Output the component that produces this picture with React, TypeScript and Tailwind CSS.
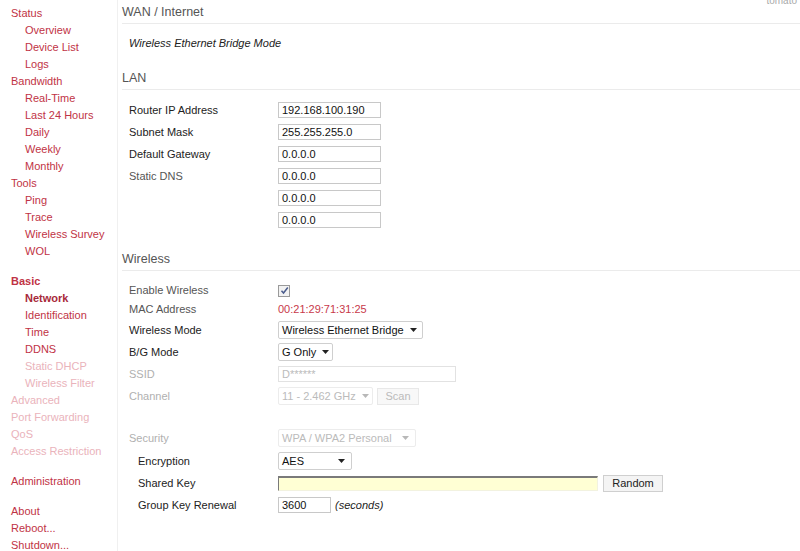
import React from "react";

const font = { fontFamily: '"Liberation Sans", Arial, sans-serif' };

type NavItem = { label: string; sub?: boolean; bold?: boolean; faded?: boolean; dark?: boolean };

const groups: NavItem[][] = [
  [
    { label: "Status" },
    { label: "Overview", sub: true },
    { label: "Device List", sub: true },
    { label: "Logs", sub: true },
    { label: "Bandwidth" },
    { label: "Real-Time", sub: true },
    { label: "Last 24 Hours", sub: true },
    { label: "Daily", sub: true },
    { label: "Weekly", sub: true },
    { label: "Monthly", sub: true },
    { label: "Tools" },
    { label: "Ping", sub: true },
    { label: "Trace", sub: true },
    { label: "Wireless Survey", sub: true },
    { label: "WOL", sub: true },
  ],
  [
    { label: "Basic", bold: true },
    { label: "Network", sub: true, bold: true, dark: true },
    { label: "Identification", sub: true },
    { label: "Time", sub: true },
    { label: "DDNS", sub: true },
    { label: "Static DHCP", sub: true, faded: true },
    { label: "Wireless Filter", sub: true, faded: true },
    { label: "Advanced", faded: true },
    { label: "Port Forwarding", faded: true },
    { label: "QoS", faded: true },
    { label: "Access Restriction", faded: true },
  ],
  [{ label: "Administration" }],
  [{ label: "About" }, { label: "Reboot..." }, { label: "Shutdown..." }],
];

function Sidebar() {
  return (
    <nav className="w-[118px] shrink-0 border-r border-[#f0f0f0] pt-[5px] text-[11px] leading-[17px]">
      {groups.map((g, i) => (
        <div key={i} className={i === 0 ? "" : "mt-[13px]"}>
          {g.map((it) => (
            <div
              key={it.label}
              className={`${it.sub ? "pl-[25px]" : "pl-[11px]"} ${it.bold ? "font-bold" : ""} ${
                it.faded ? "text-[#eab3bb]" : it.dark ? "text-[#a82a3a]" : "text-[#bf3345]"
              } whitespace-nowrap`}
            >
              {it.label}
            </div>
          ))}
        </div>
      ))}
    </nav>
  );
}

function Section({ title, children }: { title: string; children: React.ReactNode }) {
  return (
    <section>
      <h3 className="text-[12.5px] leading-[16px] text-[#555] pb-[3px] border-b border-[#ebebeb]">{title}</h3>
      {children}
    </section>
  );
}

function Row({
  label,
  children,
  indent,
  tone = "text-[#222]",
  h = "h-[22px]",
}: {
  label: string;
  children?: React.ReactNode;
  indent?: boolean;
  tone?: string;
  h?: string;
}) {
  return (
    <div className={`flex items-center ${h}`}>
      <div className={`w-[156px] shrink-0 ${indent ? "pl-[16px]" : "pl-[7px]"} ${tone}`}>{label}</div>
      <div className="flex items-center gap-[4px]">{children}</div>
    </div>
  );
}

function TextBox({ value, w = "w-[103px]", disabled }: { value: string; w?: string; disabled?: boolean }) {
  return (
    <div
      className={`${w} h-[16px] border border-[#c8c8c8] bg-white px-[3px] leading-[14px] ${
        disabled ? "text-[#bbb] border-[#e2e2e2]" : "text-[#111]"
      }`}
    >
      {value}
    </div>
  );
}

function Caret({ light }: { light?: boolean }) {
  return (
    <svg width="7" height="4" viewBox="0 0 7 4" className="ml-auto shrink-0">
      <path d="M0 0h7L3.5 4z" fill={light ? "#b8b8b8" : "#222"} />
    </svg>
  );
}

function Select({ value, w, disabled }: { value: string; w: string; disabled?: boolean }) {
  return (
    <div
      className={`${w} h-[18px] flex items-center gap-[6px] rounded-[2px] border bg-white pl-[3px] pr-[6px] ${
        disabled ? "border-[#ececec] text-[#bbb]" : "border-[#cfcfcf] text-[#111]"
      }`}
    >
      <span className="whitespace-nowrap">{value}</span>
      <Caret light={disabled} />
    </div>
  );
}

export default function App() {
  return (
    <div className="relative flex w-[800px] h-[551px] overflow-hidden bg-white text-[11px]" style={font}>
      <Sidebar />
      <main className="flex-1 pl-[4px] pt-[4px]">
        <Section title="WAN / Internet">
          <p className="italic text-[#222] pl-[7px] mt-[12px] leading-[14px]">Wireless Ethernet Bridge Mode</p>
        </Section>

        <div className="mt-[20px]">
          <Section title="LAN">
            <div className="mt-[9px]">
              <Row label="Router IP Address">
                <TextBox value="192.168.100.190" />
              </Row>
              <Row label="Subnet Mask">
                <TextBox value="255.255.255.0" />
              </Row>
              <Row label="Default Gateway">
                <TextBox value="0.0.0.0" />
              </Row>
              <Row label="Static DNS" tone="text-[#555]">
                <TextBox value="0.0.0.0" />
              </Row>
              <Row label="">
                <TextBox value="0.0.0.0" />
              </Row>
              <Row label="">
                <TextBox value="0.0.0.0" />
              </Row>
            </div>
          </Section>
        </div>

        <div className="mt-[20px]">
          <Section title="Wireless">
            <div className="mt-[10px]">
              <Row label="Enable Wireless" tone="text-[#555]" h="h-[19px]">
                <div className="w-[12px] h-[12px] border border-[#9a9a9a] bg-[#f2f2f2] flex items-center justify-center">
                  <svg width="9" height="9" viewBox="0 0 9 9">
                    <path d="M1.5 4.8l2 2.2L7.8 1.5" fill="none" stroke="#4a5c8c" strokeWidth="1.5" />
                  </svg>
                </div>
              </Row>
              <Row label="MAC Address" tone="text-[#555]" h="h-[19px]">
                <span className="text-[#c8394a]">00:21:29:71:31:25</span>
              </Row>
              <Row label="Wireless Mode">
                <Select value="Wireless Ethernet Bridge" w="w-[145px]" />
              </Row>
              <Row label="B/G Mode">
                <Select value="G Only" w="w-[55px]" />
              </Row>
              <Row label="SSID" tone="text-[#b0b0b0]">
                <TextBox value="D******" w="w-[178px]" disabled />
              </Row>
              <Row label="Channel" tone="text-[#b0b0b0]">
                <Select value="11 - 2.462 GHz" w="w-[95px]" disabled />
                <button className="h-[17px] w-[42px] border border-[#e8e8e8] bg-[#f8f8f8] text-[#bbb] leading-[15px]">
                  Scan
                </button>
              </Row>
              <div className="h-[20px]" />
              <Row label="Security" tone="text-[#b0b0b0]">
                <Select value="WPA / WPA2 Personal" w="w-[138px]" disabled />
              </Row>
              <div className="pt-[1px]">
                <Row label="Encryption" indent>
                  <Select value="AES" w="w-[74px]" />
                </Row>
                <Row label="Shared Key" indent>
                  <div className="w-[320px] h-[15px] bg-[#ffffd4] border-t-2 border-l border-[#7a7a7a] border-b border-r border-b-[#f2f2e0] border-r-[#f2f2e0]" />
                  <button className="ml-[1px] h-[17px] w-[60px] border border-[#cfcfcf] bg-[#f4f4f4] text-[#222] text-[11px] leading-[15px]">
                    Random
                  </button>
                </Row>
                <Row label="Group Key Renewal" indent>
                  <TextBox value="3600" w="w-[53px]" />
                  <span className="italic text-[#222]">(seconds)</span>
                </Row>
              </div>
            </div>
          </Section>
        </div>
      </main>
      <span className="absolute right-[3px] top-[-7px] text-[10px] text-[#aaa]">tomato</span>
    </div>
  );
}
